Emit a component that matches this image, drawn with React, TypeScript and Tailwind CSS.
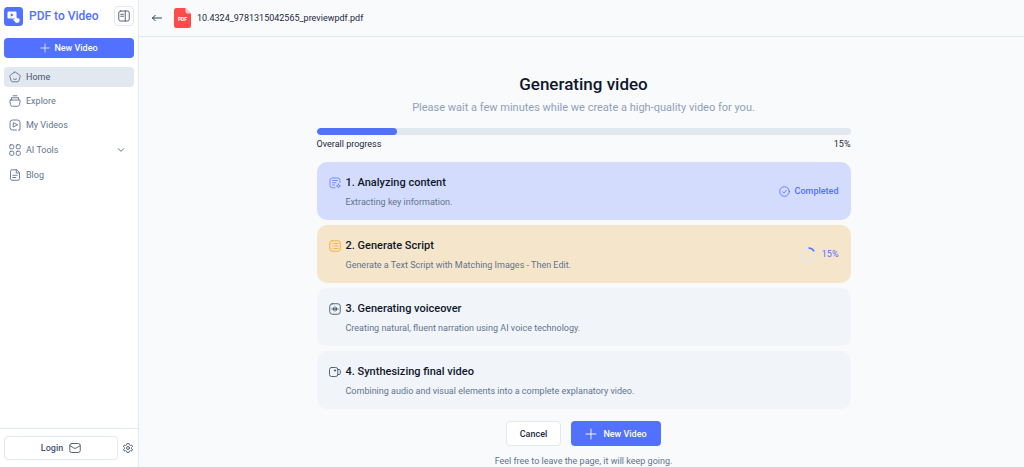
import type { ReactNode } from "react";

interface IconProps {
  children: ReactNode;
  className?: string;
}

function Icon({ children, className = "size-3" }: IconProps) {
  return (
    <svg
      className={`shrink-0 ${className}`}
      viewBox="0 0 24 24"
      fill="none"
      stroke="currentColor"
      strokeWidth={1.8}
      strokeLinecap="round"
      strokeLinejoin="round"
      aria-hidden="true"
    >
      {children}
    </svg>
  );
}

const navItems = [
  {
    label: "Home",
    active: true,
    icon: (
      <>
        <path d="M10.600 2.600 2.600 8.200a2.400 2.400 0 0 0-.9 2.700l2.500 8.600A2.600 2.600 0 0 0 6.700 21.500h10.600a2.600 2.600 0 0 0 2.500-2l2.500-8.600a2.400 2.400 0 0 0-.9-2.700l-8-5.600a2.400 2.400 0 0 0-2.800 0Z" />
        <path d="M9 16c2 1.200 4 1.200 6 0" />
      </>
    ),
  },
  {
    label: "Explore",
    icon: (
      <>
        <path d="M8 1.500h8M5.500 5.500h13" />
        <path d="M3.500 10h17a1.800 1.800 0 0 1 1.800 2.200l-1.200 7a4 4 0 0 1-4 3.300H6.900a4 4 0 0 1-4-3.300l-1.200-7A1.800 1.800 0 0 1 3.500 10Z" />
        <path d="M5.500 5.500 4 10M18.500 5.500 20 10" />
      </>
    ),
  },
  {
    label: "My Videos",
    icon: (
      <>
        <path d="M15 22H7a5 5 0 0 1-5-5V7a5 5 0 0 1 5-5h10a5 5 0 0 1 5 5v15h-3" />
        <path d="M8.500 8v8l8-4Z" />
      </>
    ),
  },
  {
    label: "AI Tools",
    expandable: true,
    icon: (
      <>
        <rect x="1.500" y="1.500" width="8" height="8" rx="2" />
        <rect x="14.500" y="1.500" width="8" height="8" rx="2" />
        <rect x="1.500" y="14.500" width="8" height="8" rx="2" />
        <rect x="14.500" y="14.500" width="8" height="8" rx="2" />
      </>
    ),
  },
  {
    label: "Blog",
    icon: (
      <>
        <path d="M14.500 1.500H6a3 3 0 0 0-3 3v15a3 3 0 0 0 3 3h12a3 3 0 0 0 3-3V8Z" />
        <path d="M14.500 1.500V8H21M7.500 12.500h9M7.500 17h6" />
      </>
    ),
  },
];

const steps = [
  {
    title: "1. Analyzing content",
    text: "Extracting key information.",
    card: "bg-[#d4dcfd]",
    iconColor: "text-[#6b85fb]",
    status: "completed",
    icon: (
      <>
        <path d="M12 21.500H6.500a4.500 4.500 0 0 1-4.500-4.500V6.500A4.500 4.500 0 0 1 6.500 2h11A4.500 4.500 0 0 1 22 6.500V11" />
        <path d="M7 7h10M7 11.500h7M7 16h4" />
        <path d="m19 14 1.300 2.700L23 18l-2.700 1.300L19 22l-1.300-2.700L15 18l2.700-1.300Z" />
      </>
    ),
  },
  {
    title: "2. Generate Script",
    text: "Generate a Text Script with Matching Images - Then Edit.",
    card: "bg-[#f5e6cb]",
    iconColor: "text-[#f5a93c]",
    status: "running",
    icon: (
      <>
        <rect x="1.500" y="1.500" width="21" height="21" rx="4.500" />
        <path d="M10 7h8M10 12h8M10 17h8M6 7h.5M6 12h.5M6 17h.5" />
      </>
    ),
  },
  {
    title: "3. Generating voiceover",
    text: "Creating natural, fluent narration using AI voice technology.",
    card: "bg-[#f1f4f9]",
    iconColor: "text-slate-600",
    status: "pending",
    icon: (
      <>
        <rect x="1.500" y="1.500" width="21" height="21" rx="5" />
        <path d="M9 9.500v5M12 7.500v9M15 9.500v5M5.500 12h13" />
      </>
    ),
  },
  {
    title: "4. Synthesizing final video",
    text: "Combining audio and visual elements into a complete explanatory video.",
    card: "bg-[#f1f4f9]",
    iconColor: "text-slate-600",
    status: "pending",
    icon: (
      <>
        <rect x="1" y="3" width="16.500" height="18" rx="4" />
        <path d="M17.500 7h3a2 2 0 0 1 2 2v6a2 2 0 0 1-2 2h-3" />
        <path d="M12 7.500v3M10.500 9h3" />
      </>
    ),
  },
];

function Plus({ className }: { className?: string }) {
  return (
    <Icon className={className}>
      <path d="M12 2v20M2 12h20" />
    </Icon>
  );
}

function Logo() {
  return (
    <svg className="size-[19px] shrink-0" viewBox="0 0 38 38" aria-hidden="true">
      <rect width="38" height="38" rx="7" fill="#5271ff" />
      <rect x="7" y="9" width="18" height="14" rx="2.500" fill="#fff" />
      <path d="m13.500 12.500 6 3.500-6 3.500Z" fill="#5271ff" />
      <path
        d="M21.500 18.500c1.200-.8 2.300 0 2.800 1l1.500 2.800 3.800.7c1.300.3 1.900 1.300 1.700 2.500l-.6 3.500c-.3 1.500-1.300 2.300-2.800 2.300h-2.600c-1 0-1.800-.3-2.500-1l-4-4.200c-.9-1.200.6-2.700 2-2l1.700.8-1.700-4c-.4-.9-.1-1.900.7-2.400Z"
        fill="#fff"
      />
    </svg>
  );
}

function PdfIcon() {
  return (
    <svg className="h-5 w-[17px] shrink-0" viewBox="0 0 34 40" aria-hidden="true">
      <path d="M5 0h18l11 11v24a5 5 0 0 1-5 5H5a5 5 0 0 1-5-5V5a5 5 0 0 1 5-5Z" fill="#ff4b4b" />
      <path d="M23 0v7a4 4 0 0 0 4 4h7Z" fill="#fbd0d0" />
      <text x="17" y="25" textAnchor="middle" fontSize="10" fontWeight="700" fill="#fff" fontFamily="Roboto, sans-serif">
        PDF
      </text>
    </svg>
  );
}

function Sidebar() {
  return (
    <aside className="flex w-[139px] shrink-0 flex-col border-r border-slate-200 bg-white">
      <div className="flex items-center gap-1.5 px-1 pt-1.5">
        <Logo />
        <span className="flex-1 text-[12px] leading-5 font-medium whitespace-nowrap text-[#5271ff]">PDF to Video</span>
        <button
          aria-label="Collapse sidebar"
          className="flex size-5 items-center justify-center rounded border border-slate-200 text-slate-600"
        >
          <Icon>
            <rect x="1.500" y="2" width="21" height="20" rx="4" />
            <path d="M14.500 2v20M5.500 8.500H11M5.500 12.500H11" />
          </Icon>
        </button>
      </div>

      <button className="mx-1 mt-3 flex h-5 items-center justify-center gap-1 rounded bg-[#5271ff] text-[9px] leading-3 font-medium text-white">
        <Plus className="size-[10px]" />
        New Video
      </button>

      <nav className="mx-1 mt-[9px] flex flex-1 flex-col gap-1">
        {navItems.map((item) => (
          <a
            key={item.label}
            href="#"
            className={`flex items-center gap-[5px] rounded px-[5px] text-[9px] leading-3 ${
              item.active ? "bg-slate-200 text-slate-600" : "text-slate-500"
            } ${item.expandable ? "h-[22px]" : "h-5"}`}
          >
            <Icon className="size-3 text-slate-500">{item.icon}</Icon>
            <span className="flex-1">{item.label}</span>
            {item.expandable && (
              <Icon className="mr-1 size-2">
                <path d="m4 8 8 8 8-8" strokeWidth={3} />
              </Icon>
            )}
          </a>
        ))}
      </nav>

      <div className="flex items-center gap-1 border-t border-slate-200 px-1 pt-[7px] pb-[7px]">
        <button className="flex h-6 flex-1 items-center justify-center gap-1.5 rounded border border-slate-200 text-[9px] leading-3 font-medium text-slate-600">
          Login
          <Icon>
            <rect x="1.500" y="3" width="21" height="18" rx="4" />
            <path d="m2 7.500 7.500 4.500a5 5 0 0 0 5 0L22 7.500" />
          </Icon>
        </button>
        <button aria-label="Settings" className="flex w-3 justify-center text-slate-600">
          <Icon className="size-[10px]">
            <path
              d="m9.500 1.500-.8 3-2.500 1.400-3-.8-2 3.700L3.500 11v2.500L1.200 15.500l2 3.700 3-.8 2.500 1.400.8 2.700h5l.8-2.700 2.500-1.400 3 .8 2-3.700-2.300-2V11l2.300-2.200-2-3.700-3 .8-2.500-1.400-.8-3Z"
              strokeWidth={2.200}
            />
            <circle cx="12" cy="12" r="3.500" strokeWidth={2.200} />
          </Icon>
        </button>
      </div>
    </aside>
  );
}

function StepStatus({ status }: { status: string }) {
  if (status === "completed") {
    return (
      <div className="flex items-center gap-[5px] text-[9px] leading-3 font-medium text-[#5271ff]">
        <Icon className="size-[11px]">
          <circle cx="12" cy="12" r="10.500" />
          <path d="m7.500 12.500 3 3 6-6.500" />
        </Icon>
        Completed
      </div>
    );
  }

  if (status === "running") {
    return (
      <div className="flex items-center gap-1.5 text-[9px] leading-3 text-[#5271ff]">
        <svg className="size-[15px] shrink-0" viewBox="0 0 30 30" fill="none" strokeWidth="3" aria-hidden="true">
          <circle cx="15" cy="15" r="13" stroke="#e2e8f0" />
          <path d="M15 2a13 13 0 0 1 11.300 6.500" stroke="#5271ff" />
        </svg>
        15%
      </div>
    );
  }

  return null;
}

export default function App() {
  const progress = 15;

  return (
    <div className="flex h-screen overflow-hidden bg-slate-50 font-['Roboto',sans-serif]">
      <Sidebar />

      <div className="flex min-w-0 flex-1 flex-col">
        <header className="flex h-[37px] shrink-0 items-center border-b border-slate-200 px-3">
          <button aria-label="Back" className="text-slate-700">
            <Icon>
              <path d="M21 12H3M8.500 6.500 3 12l5.500 5.500" strokeWidth={2} />
            </Icon>
          </button>
          <div className="ml-[11px] flex items-center gap-1.5">
            <PdfIcon />
            <span className="text-[9px] leading-3 text-slate-800">10.4324_9781315042565_previewpdf.pdf</span>
          </div>
        </header>

        <main className="flex-1 overflow-hidden pt-[35px] pl-1">
          <div className="mx-auto flex max-w-[534px] flex-col">
            <h1 className="text-center text-[17px] leading-6 font-medium text-slate-900">Generating video</h1>
            <p className="mt-1 text-center text-[11px] leading-4 text-slate-400">
              Please wait a few minutes while we create a high-quality video for you.
            </p>

            <div className="mt-3 h-[7px] overflow-hidden rounded-full bg-slate-200">
              <div className="h-full rounded-full bg-[#5271ff]" style={{ width: `${progress}%` }} />
            </div>
            <div className="mt-[3px] flex justify-between text-[9px] leading-3 text-slate-800">
              <span>Overall progress</span>
              <span>{progress}%</span>
            </div>

            <div className="mt-3 flex flex-col gap-[5px]">
              {steps.map((step) => (
                <section key={step.title} className={`flex h-[58px] items-center justify-between rounded-[10px] px-3 ${step.card}`}>
                  <div>
                    <div className="flex items-center gap-[5px]">
                      <Icon className={`size-3 ${step.iconColor}`}>{step.icon}</Icon>
                      <h2 className="text-[11px] leading-4 font-medium text-slate-900">{step.title}</h2>
                    </div>
                    <p className="mt-[5px] pl-[17px] text-[9px] leading-3 text-slate-500">{step.text}</p>
                  </div>
                  <StepStatus status={step.status} />
                </section>
              ))}
            </div>

            <div className="mt-3 flex justify-center gap-[10px] text-[9px] leading-3 font-medium">
              <button className="h-[25px] w-[55px] rounded border border-slate-200 bg-white text-slate-800">Cancel</button>
              <button className="flex h-[25px] w-[90px] items-center justify-center gap-1.5 rounded bg-[#5271ff] text-white">
                <Plus />
                New Video
              </button>
            </div>
            <p className="mt-[9px] text-center text-[9px] leading-3 text-slate-500">
              Feel free to leave the page, it will keep going.
            </p>
          </div>
        </main>
      </div>
    </div>
  );
}
